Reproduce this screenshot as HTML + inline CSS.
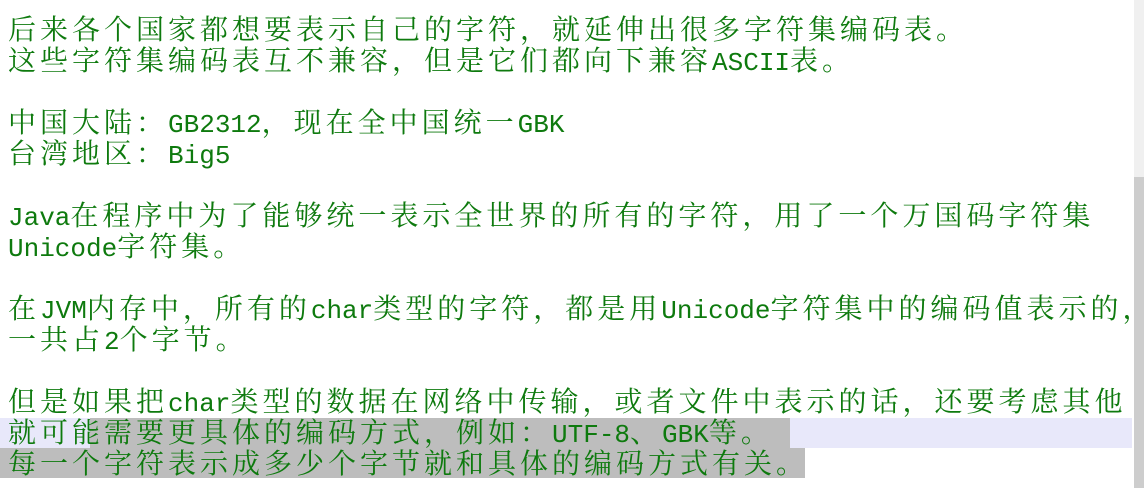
<!DOCTYPE html>
<html><head><meta charset="utf-8"><style>
html,body{margin:0;padding:0;width:1144px;height:488px;overflow:hidden;background:#fff;position:relative}
.ln{position:absolute;left:8px;height:31px;line-height:31px;white-space:pre;font-family:"Liberation Mono","Noto Serif CJK SC",monospace;font-size:26px;color:#0e7a0e;z-index:2}
i{font-style:normal;font-size:28px;letter-spacing:4px;font-family:"Noto Serif CJK SC","Noto Sans CJK SC",serif}
.bg{position:absolute}
</style></head><body>
<div class="bg" style="left:1134px;top:0;width:10px;height:177px;background:#f0f0f0"></div>
<div class="bg" style="left:1134px;top:177px;width:10px;height:311px;background:#cdcdcd"></div>
<div class="bg" style="left:0;top:418px;width:1132px;height:30px;background:#e8e8fa"></div>
<div class="bg" style="left:90px;top:418px;width:700px;height:30px;background:#bdbdbd"></div>
<div class="bg" style="left:0;top:448px;width:805px;height:30px;background:#bdbdbd"></div>
<div class="ln" style="top:13px"><i>后来各个国家都想要表示自己的字符，就延伸出很多字符集编码表。</i></div>
<div class="ln" style="top:44px"><i>这些字符集编码表互不兼容，但是它们都向下兼容</i>ASCII<i>表。</i></div>
<div class="ln" style="top:106px"><i>中国大陆：</i>GB2312<i>，现在全中国统一</i>GBK</div>
<div class="ln" style="top:137px"><i>台湾地区：</i>Big5</div>
<div class="ln" style="top:199px">Java<i>在程序中为了能够统一表示全世界的所有的字符，用了一个万国码字符集</i></div>
<div class="ln" style="top:230px">Unicode<i>字符集。</i></div>
<div class="ln" style="top:292px"><i>在</i>JVM<i>内存中，所有的</i>char<i>类型的字符，都是用</i>Unicode<i>字符集中的编码值表示的，</i></div>
<div class="ln" style="top:323px"><i>一共占</i>2<i>个字节。</i></div>
<div class="ln" style="top:385px"><i>但是如果把</i>char<i>类型的数据在网络中传输，或者文件中表示的话，还要考虑其他</i></div>
<div class="ln" style="top:416px"><i>就可能需要更具体的编码方式，例如：</i>UTF-8<i>、</i>GBK<i>等。</i></div>
<div class="ln" style="top:447px"><i>每一个字符表示成多少个字节就和具体的编码方式有关。</i></div>
</body></html>
